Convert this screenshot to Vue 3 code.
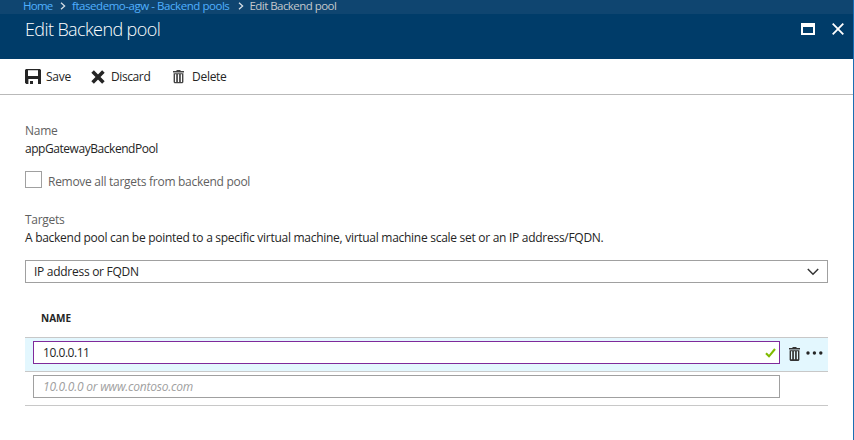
<script setup>
import { ref } from 'vue'

const poolName = 'appGatewayBackendPool'
const removeAll = ref(false)
const first = ref('10.0.0.11')
const second = ref('')
</script>

<template>
  <div class="blade">
    <nav class="crumbs">
      <a class="home">Home</a>
      <svg class="sep" width="6" height="8" viewBox="0 0 6 8"><path d="M1 .8 4.6 4 1 7.2" /></svg>
      <a class="pools">ftasedemo-agw - Backend pools</a>
      <svg class="sep" width="6" height="8" viewBox="0 0 6 8"><path d="M1 .8 4.6 4 1 7.2" /></svg>
      <span class="here">Edit Backend pool</span>
    </nav>
    <header class="head">
      <h1>Edit Backend pool</h1>
      <div class="window">
        <svg width="14" height="12" viewBox="0 0 14 12"><path fill="#fff" fill-rule="evenodd" d="M0 0h14v12H0zM2 4v6h10V4z" /></svg>
        <svg width="12" height="12" viewBox="0 0 12 12"><path fill="none" stroke="#fff" stroke-width="1.8" d="M.7.7l10.6 10.6M11.3.7.7 11.3" /></svg>
      </div>
    </header>
    <div class="toolbar">
      <button class="save">
        <svg width="16" height="15" viewBox="0 0 16 15"><path fill="#252525" fill-rule="evenodd" d="M1 0h14l1 1v14h-3v-5H3.4v5H1.2L0 13.8V1zM3 1.3V7h10V1.3zM5 12h3v3H5z" /></svg>
        <span>Save</span>
      </button>
      <button class="discard">
        <svg width="14" height="14" viewBox="0 0 14 14"><path fill="none" stroke="#252525" stroke-width="3.6" d="M1.6 1.6l10.8 10.8M12.4 1.6 1.6 12.4" /></svg>
        <span>Discard</span>
      </button>
      <button class="delete">
        <svg width="11" height="14" viewBox="0 0 11 14"><path fill="#444" d="M3.5 0h4v1H11v1.5H0V1h3.5z" /><path fill="#444" fill-rule="evenodd" d="M.6 3.3h9.8v9l-.9 1h-8l-.9-1zM2 4.3v7.6h1.2V4.3zm2.9 0v7.6h1.2V4.3zm2.9 0v7.6H9V4.3z" /></svg>
        <span>Delete</span>
      </button>
    </div>
    <main class="body">
      <div class="label">Name</div>
      <div class="value">{{ poolName }}</div>
      <label class="check">
        <input v-model="removeAll" type="checkbox" />
        <span>Remove all targets from backend pool</span>
      </label>
      <div class="label targets">Targets</div>
      <div class="hint">A backend pool can be pointed to a specific virtual machine, virtual machine scale set or an IP address/FQDN.</div>
      <div class="select">
        <span>IP address or FQDN</span>
        <svg width="12" height="8" viewBox="0 0 12 8"><path fill="none" stroke="#333" stroke-width="1.5" d="M.8 1 6 6.2 11.2 1" /></svg>
      </div>
      <div class="thead">NAME</div>
      <div class="row active">
        <div class="field">
          <input v-model="first" type="text" class="ip" />
          <svg width="11" height="10" viewBox="0 0 11 10"><path fill="none" stroke="#7fba00" stroke-width="2.1" d="M1 5.3 4 8.3 10 1" /></svg>
        </div>
        <svg class="bin" width="11" height="14" viewBox="0 0 11 14"><path fill="#333" d="M3.5 0h4v1H11v1.6H0V1h3.5z" /><path fill="#333" fill-rule="evenodd" d="M.6 3.3h9.8V13l-.9 1h-8l-.9-1zM2 4.3v8h1.2v-8zm2.9 0v8h1.2v-8zm2.9 0v8H9v-8z" /></svg>
        <svg class="dots" width="17" height="4" viewBox="0 0 17 4"><g fill="#252525"><circle cx="2" cy="2" r="1.7" /><circle cx="8.4" cy="2" r="1.7" /><circle cx="14.8" cy="2" r="1.7" /></g></svg>
      </div>
      <div class="row">
        <div class="field">
          <input v-model="second" type="text" class="empty" placeholder="10.0.0.0 or www.contoso.com" />
        </div>
      </div>
    </main>
  </div>
</template>

<style>
body {
  background: #fff;
}
</style>

<style scoped>
.blade {
  box-sizing: border-box;
  width: 854px;
  height: 440px;
  overflow: hidden;
  border-right: 1px solid #1a6fb3;
  font: 12px/16px "Open Sans", "Noto Sans", sans-serif;
  letter-spacing: -0.28px;
  color: #252525;
  white-space: nowrap;
}
.crumbs {
  display: flex;
  align-items: center;
  box-sizing: border-box;
  height: 14px;
  padding: 0 0 2px 23px;
  background: #0f4570;
  font-size: 11.5px;
  line-height: 12px;
  letter-spacing: -0.45px;
}
.crumbs a {
  color: #4fb0ff;
}
.crumbs .home {
  width: 37px;
  letter-spacing: -0.75px;
}
.crumbs .pools {
  width: 159.5px;
  margin-right: 6px;
}
.sep {
  fill: none;
  stroke: #d5dde4;
  stroke-width: 1.3;
}
.sep + * {
  margin-left: 6px;
}
.crumbs .here {
  color: #c4c8cc;
  letter-spacing: -0.55px;
}
.head {
  display: flex;
  justify-content: space-between;
  height: 45px;
  background: #003c69;
  padding: 3px 9px 0 25px;
  box-sizing: border-box;
}
h1 {
  margin: 0;
  font-size: 18px;
  line-height: 24px;
  font-weight: 300;
  letter-spacing: -0.6px;
  color: #fff;
}
.window {
  display: flex;
  gap: 17px;
  padding-top: 6px;
}
.toolbar {
  display: flex;
  align-items: center;
  box-sizing: border-box;
  height: 36px;
  padding-left: 25px;
  border-bottom: 1px solid #b9b9b9;
}
button {
  display: flex;
  align-items: center;
  padding: 0;
  border: 0;
  background: none;
  font: inherit;
  letter-spacing: inherit;
  color: inherit;
}
.save {
  gap: 5px;
  width: 66px;
}
.discard {
  gap: 6px;
  width: 82px;
  letter-spacing: -0.4px;
}
.delete {
  gap: 8px;
}
.body {
  padding: 28px 25px 0;
}
.label {
  color: #5f5f5f;
}
.value {
  margin-top: 2px;
  letter-spacing: -0.45px;
}
.check {
  display: flex;
  align-items: center;
  gap: 6px;
  height: 17px;
  margin-top: 14px;
  color: #5f5f5f;
}
.check span {
  padding-top: 4px;
}
.check input {
  appearance: none;
  box-sizing: border-box;
  width: 17px;
  height: 17px;
  margin: 0;
  border: 1px solid #a0a0a0;
}
.targets {
  margin-top: 24px;
}
.hint {
  margin-top: 2px;
}
.select {
  display: flex;
  align-items: center;
  justify-content: space-between;
  box-sizing: border-box;
  width: 803px;
  height: 23px;
  margin-top: 14px;
  padding: 0 8px;
  border: 1px solid #a0a0a0;
}
.thead {
  box-sizing: border-box;
  width: 803px;
  height: 55px;
  padding: 27px 16px 0;
  border-bottom: 1px solid #c8c8c8;
  font-size: 10px;
  font-weight: 700;
  letter-spacing: 0;
}
.row {
  display: flex;
  box-sizing: border-box;
  width: 803px;
  height: 34px;
  padding: 3px 0 0 8px;
  border-bottom: 1px solid #c8c8c8;
}
.active {
  background: #e3f7fe;
}
.field {
  display: flex;
  align-items: center;
  box-sizing: border-box;
  width: 747px;
  height: 23px;
  padding: 0 3px 0 9px;
  border: 1px solid #a0a0a0;
  background: #fff;
}
.active .field {
  border-color: #7f2a9b;
}
.field input {
  flex: 1;
  min-width: 0;
  height: 16px;
  padding: 0;
  border: 0;
  outline: 0;
  background: none;
  font: inherit;
  letter-spacing: -0.22px;
  color: inherit;
}
.field .ip {
  letter-spacing: -0.46px;
}
.empty::placeholder {
  color: #a0a0a0;
  font-style: italic;
  opacity: 1;
}
.bin {
  margin: 6px 0 0 8.5px;
}
.dots {
  margin: 10px 0 0 6.5px;
}
</style>
